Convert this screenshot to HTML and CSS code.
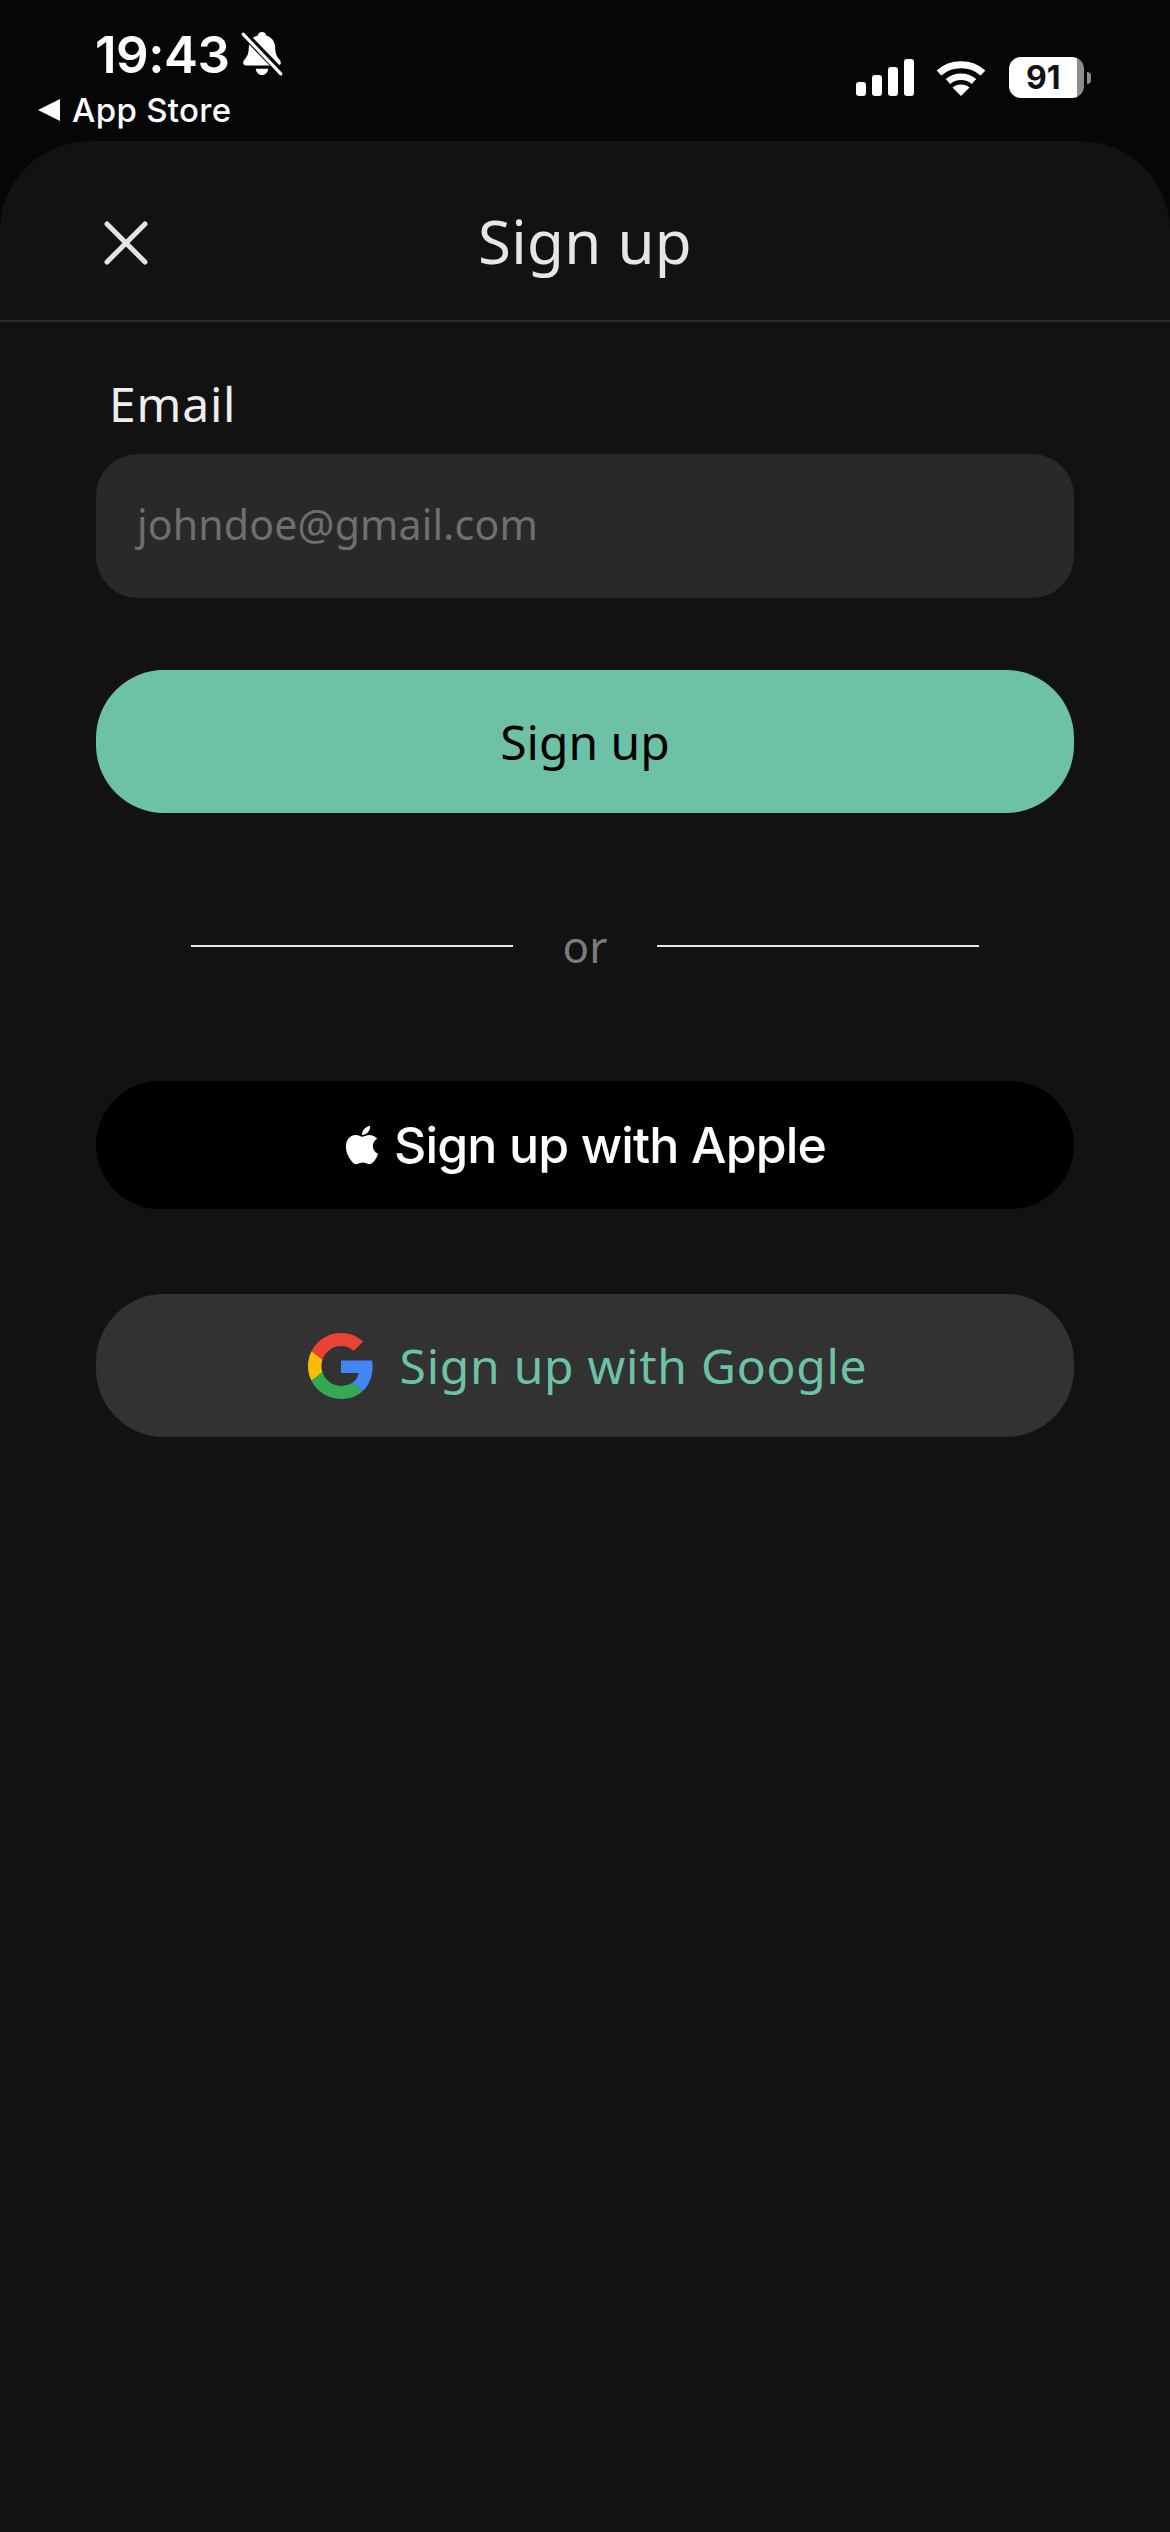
FILE: index.html
```html
<!DOCTYPE html>
<html lang="en">
<head>
<meta charset="utf-8">
<title>Sign up</title>
<link rel="stylesheet" href="styles.css">
</head>
<body>
<div class="screen">
  <div class="status">
    <div class="status-left">
      <div class="time-row">
        <span class="time">19:43</span>
        <svg class="bell" viewBox="0 0 40 44" width="42" height="46">
          <path fill="#fff" d="M20 1c2.400 0 3.800 1.600 4 3.200 5.400 1.500 8.300 5.800 8.600 11.500.2 5 .9 8 3.600 11 1.300 1.500 1.800 2.600 1.800 3.700 0 1.700-1.300 2.600-3 2.600H5c-1.700 0-3-.9-3-2.600 0-1.100.5-2.200 1.800-3.700 2.700-3 3.400-6 3.600-11 .3-5.700 3.200-10 8.600-11.500.2-1.600 1.600-3.200 4-3.200zM14 36h12c-.3 3.300-2.800 6-6 6s-5.700-2.700-6-6z"/>
          <path stroke="#060606" stroke-width="7" d="M0 0 40 41"/>
          <path stroke="#fff" stroke-width="3" stroke-linecap="round" d="M2 3 38 41"/>
        </svg>
      </div>
      <div class="back-row">
        <svg class="back-arrow" viewBox="1 1 20 20" width="22" height="22"><path fill="#fff" d="M21 1v20L1 11z"/></svg>
        <span class="back-label">App Store</span>
      </div>
    </div>
    <div class="status-right">
      <svg class="signal" viewBox="0 0 58 37" width="58" height="37">
        <rect x="0" y="23" width="10" height="14" rx="3" fill="#fff"/>
        <rect x="16" y="16" width="10" height="21" rx="3" fill="#fff"/>
        <rect x="32" y="8" width="10" height="29" rx="3" fill="#fff"/>
        <rect x="48" y="0" width="10" height="37" rx="3" fill="#fff"/>
      </svg>
      <svg class="wifi" viewBox="0 0 50 38" width="50" height="38">
        <path fill="none" stroke="#fff" stroke-width="7" d="M3 14C15 3 35 3 47 14"/>
        <path fill="none" stroke="#fff" stroke-width="6.500" d="M12 22.500C19 16 31 16 38 22.500"/>
        <path fill="#fff" d="M25 37 16.500 28.500C21 24.500 29 24.500 33.500 28.500z"/>
      </svg>
      <div class="battery">
        <div class="battery-body"><span class="battery-num">91</span></div>
        <div class="battery-nub"></div>
      </div>
    </div>
  </div>

  <main class="sheet">
    <header class="sheet-head">
      <svg class="close" viewBox="0 0 44 44" width="44" height="44">
        <path stroke="#e4e4e4" stroke-width="5" stroke-linecap="round" d="M3 3 41 41M41 3 3 41"/>
      </svg>
      <h1 class="title">Sign up</h1>
    </header>

    <div class="form">
      <label class="label">Email</label>
      <div class="input">johndoe@gmail.com</div>
      <button class="btn btn-primary">Sign up</button>
      <div class="divider">
        <span class="rule"></span>
        <span class="or">or</span>
        <span class="rule"></span>
      </div>
      <button class="btn btn-apple">
        <svg class="apple" viewBox="3.500 3 16 18" width="34" height="40"><path fill="#fff" d="M17.050 20.280c-.98.950-2.050.800-3.080.350-1.090-.460-2.090-.480-3.240 0-1.440.620-2.200.440-3.060-.350C2.790 15.250 3.510 7.590 9.050 7.310c1.350.070 2.290.740 3.080.8 1.180-.240 2.310-.930 3.570-.840 1.510.120 2.650.720 3.400 1.800-3.120 1.870-2.380 5.980.48 7.130-.57 1.500-1.310 2.990-2.540 4.090zM12.030 7.250c-.15-2.230 1.660-4.070 3.740-4.250.29 2.580-2.340 4.500-3.740 4.250z"/></svg>
        <span class="apple-text">Sign up with Apple</span>
      </button>
      <button class="btn btn-google">
        <svg class="google" viewBox="0 0 48 48" width="66" height="66">
          <path fill="#EA4335" d="M24 9.500c3.540 0 6.710 1.220 9.210 3.600l6.850-6.850C35.900 2.380 30.470 0 24 0 14.620 0 6.510 5.380 2.560 13.220l7.980 6.190C12.430 13.720 17.740 9.500 24 9.500z"/>
          <path fill="#4285F4" d="M46.980 24.550c0-1.570-.15-3.090-.38-4.550H24v9.020h12.940c-.58 2.960-2.260 5.480-4.780 7.180l7.730 6c4.510-4.180 7.090-10.360 7.090-17.650z"/>
          <path fill="#FBBC05" d="M10.530 28.590c-.48-1.450-.76-2.990-.76-4.590s.27-3.140.76-4.590l-7.980-6.190C.92 16.460 0 20.120 0 24c0 3.880.92 7.540 2.560 10.780l7.970-6.190z"/>
          <path fill="#34A853" d="M24 48c6.480 0 11.930-2.130 15.890-5.810l-7.730-6c-2.150 1.450-4.920 2.300-8.160 2.300-6.260 0-11.570-4.220-13.470-9.910l-7.980 6.190C6.510 42.620 14.620 48 24 48z"/>
        </svg>
        <span>Sign up with Google</span>
      </button>
    </div>
  </main>
</div>
</body>
</html>
```

FILE: styles.css
```css
* { box-sizing: border-box; }
html, body { margin: 0; padding: 0; background: #060606; }
.screen {
  width: 1170px;
  height: 2532px;
  display: flex;
  flex-direction: column;
  overflow: hidden;
  background: #060606;
  font-family: "Noto Sans", sans-serif;
}
.status {
  height: 141px;
  flex: none;
  display: flex;
  justify-content: space-between;
  align-items: flex-start;
}
.status-left { display: flex; flex-direction: column; padding-top: 25px; }
.time-row { display: flex; align-items: center; gap: 12px; padding-left: 95px; height: 58px; }
.time { font-family: Inter, sans-serif; font-size: 51px; font-weight: 600; color: #fff; letter-spacing: -0.5px; }
.bell { flex: none; }
.back-row { display: flex; align-items: center; gap: 12px; padding-left: 38px; margin-top: 9px; height: 36px; }
.back-arrow { flex: none; }
.back-label { font-family: Inter, sans-serif; font-size: 33px; font-weight: 500; color: #fff; letter-spacing: .3px; }
.status-right { display: flex; align-items: flex-start; padding: 57px 79px 0 0; }
.signal { margin-top: 2px; }
.wifi { margin: 2px 0 0 22px; }
.battery { display: flex; align-items: center; margin-left: 23px; }
.battery-body {
  width: 75px;
  height: 41px;
  border-radius: 12px;
  background: linear-gradient(to right, #fff 68px, #8c8c8c 68px);
  display: flex;
  align-items: center;
  padding-left: 17px;
}
.battery-num { font-family: Inter, sans-serif; font-size: 32px; font-weight: 700; color: #111; line-height: 1; }
.battery-nub { width: 4px; height: 12px; margin-left: 3px; background: #8c8c8c; border-radius: 0 4px 4px 0; }
.sheet {
  flex: 1;
  background: #121212;
  border-radius: 90px 90px 0 0;
  display: flex;
  flex-direction: column;
}
.sheet-head {
  position: relative;
  height: 181px;
  flex: none;
  padding-top: 20px;
  border-bottom: 2px solid #2b2b2b;
  display: flex;
  align-items: center;
  justify-content: center;
}
.close { position: absolute; left: 104px; top: 80px; }
.title { margin: 0; font-size: 60px; font-weight: 400; color: #e6e6e6; line-height: 1; letter-spacing: .3px; }
.form { display: flex; flex-direction: column; padding: 0 96px; }
.label { font-size: 48px; color: #eee; margin: 52px 0 0 13px; line-height: 60px; letter-spacing: .8px; }
.input {
  height: 144px;
  margin-top: 20px;
  border-radius: 42px;
  background: #292929;
  color: #6f6f6f;
  font-size: 41px;
  display: flex;
  align-items: flex-start;
  padding: 42px 0 0 41px;
  line-height: 56px;
  letter-spacing: .2px;
}
.btn {
  font-family: inherit;
  border: 0;
  padding: 0;
  display: flex;
  align-items: center;
  justify-content: center;
  width: 100%;
}
.btn-primary {
  height: 143px;
  margin-top: 72px;
  border-radius: 68px;
  background: #6cc1a7;
  color: #000;
  font-size: 48px;
}
.divider { display: flex; align-items: center; justify-content: center; height: 60px; margin-top: 103px; }
.rule { width: 322px; height: 2px; background: #e8e8e8; }
.or { width: 144px; text-align: center; color: #7b7b7b; font-size: 44px; line-height: 60px; }
.btn-apple {
  height: 128px;
  margin-top: 105px;
  border-radius: 64px;
  background: #000;
  color: #fff;
  gap: 16px;
}
.apple-text { font-family: Inter, sans-serif; font-size: 50px; font-weight: 500; letter-spacing: -0.85px; }
.btn-google {
  height: 143px;
  margin-top: 85px;
  padding-left: 5px;
  border-radius: 68px;
  background: #323232;
  color: #6cc1a7;
  font-size: 48px;
  letter-spacing: .75px;
  gap: 26px;
}
```
